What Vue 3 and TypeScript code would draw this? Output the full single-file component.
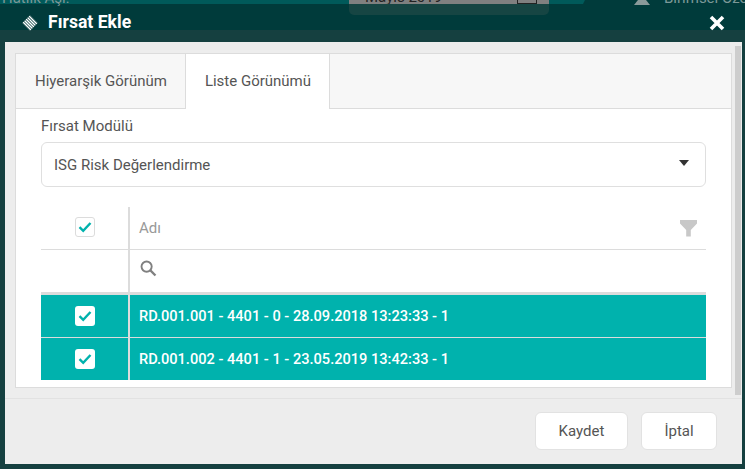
<script setup lang="ts">
interface Row { id: number; label: string }
const rows: Row[] = [
  { id: 1, label: 'RD.001.001 - 4401 - 0 - 28.09.2018 13:23:33 - 1' },
  { id: 2, label: 'RD.001.002 - 4401 - 1 - 23.05.2019 13:42:33 - 1' },
]
</script>

<template>
  <div class="screen">
    <div class="page-behind">
      <div class="strip"></div>
      <span class="behind-label">Hatlık Aşı:</span>
      <div class="date-wrap"><div class="date-input"><span>Mayıs 2019</span><i class="date-btn"></i></div></div>
      <div class="person"></div>
      <span class="behind-user">Birimsel Özet</span>
      <div class="frame"></div>
    </div>

    <header class="head">
      <svg class="logo" width="16" height="16" viewBox="0 0 16 16">
        <defs><clipPath id="dm"><polygon points="8,0.3 15.7,8 8,15.7 0.3,8" /></clipPath></defs>
        <g clip-path="url(#dm)" stroke="#fff" stroke-width="1.4">
          <path d="M0 0 L16 16 M1.5 -1.5 L17.5 14.5 M3 -3 L19 13 M4.5 -4.5 L20.5 11.5 M-1.5 1.5 L14.5 17.5 M-3 3 L13 19 M-4.5 4.5 L11.5 20.5" />
        </g>
      </svg>
      <h1 class="title">Fırsat Ekle</h1>
      <svg class="close" width="16" height="16" viewBox="0 0 16 16">
        <path d="M2 2 L14 14 M14 2 L2 14" stroke="#fff" stroke-width="3.6" />
      </svg>
    </header>

    <main class="dialog">
      <div class="scrollbar"></div>
      <section class="body">
        <div class="box">
          <nav class="tabs">
            <div class="tab">Hiyerarşik Görünüm</div>
            <div class="tab active">Liste Görünümü</div>
          </nav>
          <div class="content">
            <div class="field-label">Fırsat Modülü</div>
            <div class="select">
              <span>ISG Risk Değerlendirme</span>
              <i class="caret"></i>
            </div>
            <div class="grid">
              <div class="g-row head-row">
                <div class="c-check">
                  <span class="cb outlined">
                    <svg width="14" height="12" viewBox="0 0 14 12"><path d="M1.5 6.2 L5.2 9.8 L12.5 2" fill="none" stroke="#00b2ad" stroke-width="2.4" /></svg>
                  </span>
                </div>
                <div class="c-name name-head">
                  <span>Adı</span>
                  <svg class="funnel" width="17" height="17" viewBox="0 0 17 17"><path d="M0 0 H17 V3.5 L10.8 10 V16.5 H6.2 V10 L0 3.5 Z" fill="#c8c8c8" /></svg>
                </div>
              </div>
              <div class="g-row filter-row">
                <div class="c-check"></div>
                <div class="c-name">
                  <svg class="lens" width="17" height="17" viewBox="0 0 18 18"><circle cx="7" cy="7" r="5.4" fill="none" stroke="#808080" stroke-width="2" /><path d="M11 11 L16.4 16.4" stroke="#808080" stroke-width="2.4" /></svg>
                </div>
              </div>
              <div v-for="r in rows" :key="r.id" class="g-row data-row">
                <div class="c-check">
                  <span class="cb">
                    <svg width="14" height="12" viewBox="0 0 14 12"><path d="M1.5 6.2 L5.2 9.8 L12.5 2" fill="none" stroke="#00b2ad" stroke-width="2.4" /></svg>
                  </span>
                </div>
                <div class="c-name">{{ r.label }}</div>
              </div>
            </div>
          </div>
        </div>
      </section>
      <footer class="foot">
        <button class="btn save" type="button">Kaydet</button>
        <button class="btn cancel" type="button">İptal</button>
      </footer>
    </main>
  </div>
</template>

<style>
html, body { margin: 0; background: #0f4040; }
</style>

<style scoped>
.screen {
  position: relative;
  width: 745px;
  height: 469px;
  overflow: hidden;
  display: flex;
  flex-direction: column;
  background: #003b3b;
  font-family: Roboto, "Liberation Sans", sans-serif;
  color: #555;
}
.page-behind { position: absolute; inset: 0; }
.strip { position: absolute; left: 0; top: 0; width: 745px; height: 4px; background: #005a5a; clip-path: polygon(0 0, 585px 0, 583px 100%, 0 100%); }
.behind-label { position: absolute; left: 2px; top: -11px; font-size: 15px; color: #7c9898; }
.date-wrap { position: absolute; left: 349px; top: -10px; width: 200px; height: 25px; background: #164543; border-radius: 0 0 5px 5px; }
.date-input { height: 14px; background: #808080; display: flex; justify-content: space-between; padding: 0 12px 0 16px; font-size: 15px; line-height: 14px; color: #222; overflow: hidden; }
.date-btn { width: 20px; height: 14px; border: 1px solid #222; box-sizing: border-box; }
.person { position: absolute; left: 634px; top: 0; width: 16px; height: 5px; background: #8a9a9a; clip-path: polygon(25% 0, 75% 0, 100% 100%, 0 100%); }
.behind-user { position: absolute; left: 664px; top: -11px; font-size: 15px; color: #7c9898; white-space: nowrap; }
.frame { position: absolute; left: 0; right: 0; top: 30px; bottom: 0; background: #154040; }

.head {
  position: relative;
  height: 42px;
  flex: none;
  box-sizing: border-box;
  padding: 3px 20px 0 22px;
  display: flex;
  align-items: center;
}
.logo { margin-right: 10px; }
.title { margin: 0; flex: 1; font-size: 17.6px; font-weight: 700; color: #fff; line-height: 1; }

.dialog {
  position: relative;
  flex: 1;
  margin: 0 3px 5px 5px;
  background: #ededed;
  display: flex;
  flex-direction: column;
  min-height: 0;
}
.scrollbar { position: absolute; left: 730px; top: 4px; width: 6px; height: 349px; background: #cdcdcd; }
.body { height: 357px; box-sizing: border-box; padding: 11px 10px 0; border-bottom: 1px solid #e2e2e2; flex: none; }
.box { height: 335px; box-sizing: border-box; border: 1px solid #dcdcdc; background: #fff; display: flex; flex-direction: column; }
.tabs { height: 55px; flex: none; box-sizing: border-box; background: #f7f7f7; border-bottom: 1px solid #dcdcdc; display: flex; }
.tab { height: 54px; line-height: 54px; box-sizing: border-box; padding: 0 18px 0 19px; font-size: 15px; border-right: 1px solid #dcdcdc; color: #555; white-space: nowrap; }
.tab.active { background: #fff; height: 55px; }
.content { padding: 8px 25px 0; }
.field-label { font-size: 15px; line-height: 19px; height: 25px; color: #555; }
.select { height: 45px; box-sizing: border-box; border: 1px solid #dfdfdf; border-radius: 6px; display: flex; align-items: center; justify-content: space-between; padding: 0 16px 0 12px; font-size: 15px; color: #555; }
.caret { width: 0; height: 0; border-left: 5px solid transparent; border-right: 5px solid transparent; border-top: 6px solid #333; margin-top: -3px; }
.grid { margin-top: 20px; }
.g-row { display: flex; }
.c-check { width: 87px; flex: none; display: flex; align-items: center; justify-content: center; box-sizing: border-box; }
.c-name { flex: 1; border-left: 2px solid #dcdcdc; padding: 0 9px; display: flex; align-items: center; font-size: 15px; }
.head-row { height: 43px; box-sizing: border-box; border-bottom: 1px solid #dcdcdc; }
.head-row .c-check { padding-bottom: 2px; }
.name-head { justify-content: space-between; color: #999; padding-right: 9px; }
.filter-row { height: 45px; box-sizing: border-box; border-bottom: 3px solid #dcdcdc; }
.lens { margin-top: -5px; margin-left: 1px; }
.data-row { height: 43px; box-sizing: border-box; background: #00b2ad; color: #fff; font-weight: 500; border-bottom: 1px solid #dcdcdc; }
.data-row .c-name { font-size: 14.6px; }
.data-row:last-child { height: 42px; border-bottom: 0; }
.cb { width: 20px; height: 20px; border-radius: 3px; background: #fff; display: flex; align-items: center; justify-content: center; box-sizing: border-box; }
.cb.outlined { border: 1px solid #dcdcdc; }
.foot { flex: 1; display: flex; justify-content: flex-end; align-items: flex-start; gap: 13px; padding: 13px 25px 0 0; }
.btn { height: 38px; border: 1px solid #e2e2e2; border-radius: 6px; background: #fff; font-family: inherit; font-size: 15px; color: #555; padding: 0; }
.save { width: 93px; }
.cancel { width: 76px; }
</style>
